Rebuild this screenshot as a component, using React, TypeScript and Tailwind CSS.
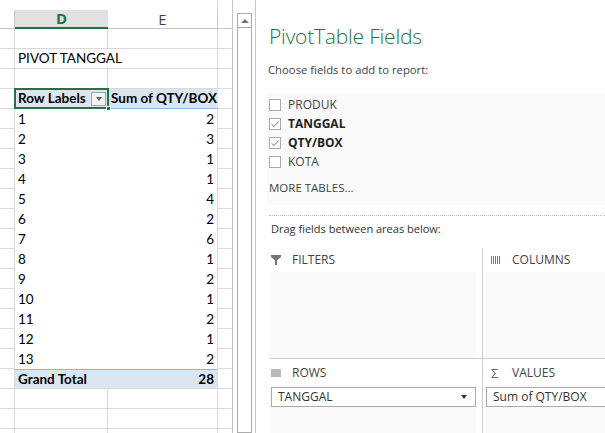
import React from 'react';

type Row =
  | { kind: 'blank' }
  | { kind: 'title' }
  | { kind: 'header' }
  | { kind: 'data'; label: string; value: number }
  | { kind: 'total'; value: number };

const pivotData: [string, number][] = [
  ['1', 2], ['2', 3], ['3', 1], ['4', 1], ['5', 4], ['6', 2], ['7', 6],
  ['8', 1], ['9', 2], ['10', 1], ['11', 2], ['12', 1], ['13', 2],
];

const rows: Row[] = [
  { kind: 'blank' },
  { kind: 'title' },
  { kind: 'blank' },
  { kind: 'header' },
  ...pivotData.map(([label, value]) => ({ kind: 'data' as const, label, value })),
  { kind: 'total', value: 28 },
  { kind: 'blank' },
  { kind: 'blank' },
  { kind: 'blank' },
];

const cellFont = { fontFamily: 'Lato, "Liberation Sans", sans-serif' };
const uiFont = { fontFamily: '"Open Sans", "Noto Sans", sans-serif' };

// Sheet row: left stub | D | E | F stub
const SheetRow: React.FC<{ row: Row }> = ({ row }) => {
  const edge = 'h-5 border-b border-r border-[#d9d9d9]';
  const stubL = <div className={`${edge} w-[15px] shrink-0`} />;
  const stubR = <div className={`${edge} w-[15px] shrink-0 border-r-[#c0c0c0]`} />;

  if (row.kind === 'blank') {
    return (
      <div className="flex">
        {stubL}
        <div className={`${edge} w-[93px]`} />
        <div className={`${edge} w-[110px]`} />
        {stubR}
      </div>
    );
  }
  if (row.kind === 'title') {
    return (
      <div className="flex">
        {stubL}
        <div className={`${edge} w-[203px] flex items-center pl-[3px] text-[13.5px] text-black whitespace-nowrap`}>
          PIVOT TANGGAL
        </div>
        {stubR}
      </div>
    );
  }
  if (row.kind === 'header') {
    return (
      <div className="flex">
        {stubL}
        <div className="relative h-5 w-[93px] bg-[#dce6f1] border-b border-[#95b3d7]">
          <div className="absolute -left-px -top-px -bottom-px -right-px border-2 border-[#217346]" />
          <div className="absolute right-[-3px] bottom-[-3px] w-[5px] h-[5px] bg-[#217346] border border-white" />
          <div className="flex h-full items-center pl-[3px] text-[13.5px] font-bold text-black">Row Labels</div>
          <div className="absolute right-[2px] top-[3px] w-[15px] h-[14px] bg-[#f2f2f2] border border-[#a6a6a6] flex items-center justify-center">
            <div className="w-0 h-0 border-l-[3.5px] border-r-[3.5px] border-t-[4px] border-l-transparent border-r-transparent border-t-[#666]" />
          </div>
        </div>
        <div className="h-5 w-[110px] bg-[#dce6f1] border-b border-[#95b3d7] flex items-center pl-[3px] text-[13.5px] font-bold text-black whitespace-nowrap">
          Sum of QTY/BOX
        </div>
        {stubR}
      </div>
    );
  }
  if (row.kind === 'data') {
    return (
      <div className="flex">
        {stubL}
        <div className="h-5 w-[93px] flex items-center pl-[3px] text-[13.5px] text-black">{row.label}</div>
        <div className="h-5 w-[110px] border-r border-[#d9d9d9] flex items-center justify-end pr-[3px] text-[13.5px] text-black">{row.value}</div>
        {stubR}
      </div>
    );
  }
  return (
    <div className="flex">
      {stubL}
      <div className="h-5 w-[93px] bg-[#dce6f1] border-t border-[#95b3d7] border-b border-b-[#d9d9d9] flex items-center pl-[3px] text-[13.5px] font-bold text-black">Grand Total</div>
      <div className="h-5 w-[110px] bg-[#dce6f1] border-t border-[#95b3d7] border-r border-r-[#d9d9d9] border-b border-b-[#d9d9d9] flex items-center justify-end pr-[3px] text-[13.5px] font-bold text-black">{row.value}</div>
      {stubR}
    </div>
  );
};

const Sheet: React.FC = () => (
  <div className="w-[234px] shrink-0 overflow-hidden" style={cellFont}>
    <div className="h-[10px] flex">
      <div className="w-[15px]" />
      <div className="w-[93px]" />
      <div className="w-[110px] border-r border-[#d9d9d9]" />
      <div className="w-[15px] border-r border-[#c0c0c0]" />
    </div>
    {/* column headers */}
    <div className="flex h-[19px]">
      <div className="w-[15px] border-b border-r border-[#c6c6c6]" />
      <div className="w-[93px] bg-[#e1e1e1] border-b-2 border-[#217346] flex items-center justify-center text-[15px] font-bold text-[#217346]" style={uiFont}>
        D
      </div>
      <div className="w-[110px] border-b border-r border-[#c6c6c6] flex items-center justify-center text-[15px] text-[#444]" style={uiFont}>
        E
      </div>
      <div className="w-[15px] border-b border-r border-[#c6c6c6]" />
    </div>
    {rows.map((row, i) => (
      <SheetRow key={i} row={row} />
    ))}
  </div>
);

const ScrollGutter: React.FC = () => (
  <div className="w-[22px] shrink-0 flex pt-[13px] pl-[3px] pr-[3px] border-r border-[#c6c6c6]">
    <div className="w-[16px] border border-[#ababab] flex flex-col">
      <div className="h-[14px] border-b border-[#ababab] flex items-center justify-center">
        <div className="w-0 h-0 border-l-[4px] border-r-[4px] border-b-[4px] border-l-transparent border-r-transparent border-b-[#777]" />
      </div>
    </div>
  </div>
);

const Check: React.FC<{ on?: boolean }> = ({ on }) => (
  <div className="w-[12px] h-[12px] border border-[#ababab] bg-white flex items-center justify-center">
    {on && (
      <svg width="10" height="10" viewBox="0 0 10 10">
        <path d="M1.5 5.2 L4 7.6 L8.6 2.4" fill="none" stroke="#777" strokeWidth="1" />
      </svg>
    )}
  </div>
);

const fields = [
  { name: 'PRODUK', on: false },
  { name: 'TANGGAL', on: true },
  { name: 'QTY/BOX', on: true },
  { name: 'KOTA', on: false },
];

const Funnel = () => (
  <svg width="10" height="10" viewBox="0 0 10 10">
    <path d="M0 0 H10 V2 L6 5.5 V10 H4 V5.5 L0 2 Z" fill="#777" />
  </svg>
);
const Bars = () => (
  <svg width="10" height="10" viewBox="0 0 10 10">
    {[0, 2, 4, 6, 8].map((x) => (
      <rect key={x} x={x} y="1" width="1" height="8" fill="#777" />
    ))}
  </svg>
);
const Lines = () => (
  <svg width="10" height="10" viewBox="0 0 10 10">
    {[1.5, 3.5, 5.5, 7.5].map((y) => (
      <rect key={y} x="0" y={y} width="10" height="1" fill="#777" />
    ))}
  </svg>
);

const AreaHead: React.FC<{ icon: React.ReactNode; label: string }> = ({ icon, label }) => (
  <div className="h-[24px] flex items-center gap-[11px] pl-[1px] text-[12px] text-[#444]">
    <span className="w-[10px] flex items-center">{icon}</span>
    <span>{label}</span>
  </div>
);

const Pane: React.FC = () => (
  <div className="flex-1 bg-white overflow-hidden" style={uiFont}>
    <div className="pl-[13px] pt-[26px] h-[57px] text-[21px] font-light text-[#217346] leading-none whitespace-nowrap tracking-[-0.2px]">
      PivotTable Fields
    </div>
    <div className="pl-[12px] h-[36px] flex items-start pt-[5px] text-[11.3px] text-[#444]">Choose fields to add to report:</div>
    <div className="ml-[11px] bg-[#fafafa] pt-[2px]">
      {fields.map((f) => (
        <div key={f.name} className="h-[19px] flex items-center gap-[7px] pl-[2px]">
          <Check on={f.on} />
          <span className={`text-[12px] ${f.on ? 'font-bold text-[#222]' : 'text-[#444]'}`}>{f.name}</span>
        </div>
      ))}
      <div className="h-[34px] flex items-center pl-[2px] text-[11.5px] text-[#444]">MORE TABLES...</div>
    </div>
    <div className="ml-[13px] mt-[10px] border-t border-dotted border-[#bbb]" />
    <div className="pl-[15px] h-[26px] flex items-center text-[11px] text-[#333]">Drag fields between areas below:</div>
    <div className="ml-[14px] mt-[6px] grid grid-cols-[213px_1fr]">
      <div className="border-r border-[#ccc] pr-[6px]">
        <AreaHead icon={<Funnel />} label="FILTERS" />
        <div className="h-[86px] bg-[#f9f9f9]" />
      </div>
      <div className="pl-[3px]">
        <div className="pl-[4px]">
          <AreaHead icon={<Bars />} label="COLUMNS" />
        </div>
        <div className="h-[86px] bg-[#f9f9f9]" />
      </div>
      <div className="col-span-2 border-t border-[#ccc]" />
      <div className="border-r border-[#ccc] pr-[6px] pt-[2px]">
        <AreaHead icon={<Lines />} label="ROWS" />
        <div className="bg-[#f9f9f9] h-[60px] pt-[2px] pl-[1px]">
          <div className="h-[20px] bg-white border border-[#ababab] flex items-center justify-between pl-[6px] pr-[8px] text-[12px] text-[#333]">
            <span>TANGGAL</span>
            <span className="w-0 h-0 border-l-[3.5px] border-r-[3.5px] border-t-[4px] border-l-transparent border-r-transparent border-t-[#333]" />
          </div>
        </div>
      </div>
      <div className="pl-[3px] pt-[2px]">
        <div className="pl-[4px]">
          <AreaHead icon={<span className="text-[13px] text-[#666] leading-none">Σ</span>} label="VALUES" />
        </div>
        <div className="bg-[#f9f9f9] h-[60px] pt-[2px]">
          <div className="h-[20px] bg-white border border-r-0 border-[#ababab] flex items-center pl-[6px] text-[12px] text-[#333] whitespace-nowrap">
            Sum of QTY/BOX
          </div>
        </div>
      </div>
    </div>
  </div>
);

export default function App() {
  return (
    <div className="w-[605px] h-[433px] overflow-hidden bg-white flex">
      <Sheet />
      <ScrollGutter />
      <Pane />
    </div>
  );
}
